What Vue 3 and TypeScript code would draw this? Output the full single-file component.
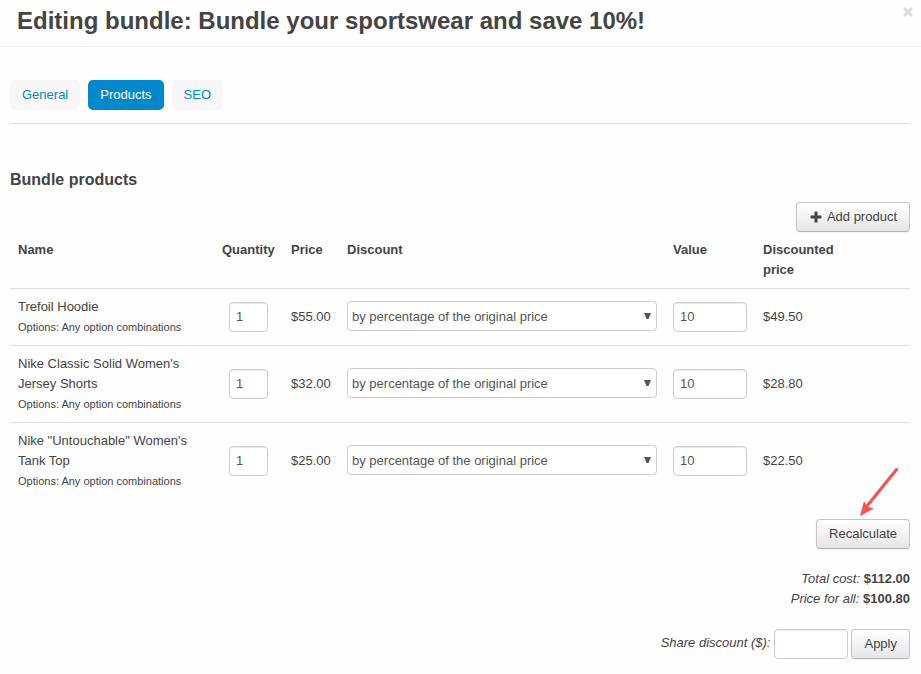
<script setup lang="ts">
import { ref } from 'vue'

interface Product {
  id: number
  name: string
  quantity: string
  price: string
  discount: string
  value: string
  discounted: string
}

const tabs = ['General', 'Products', 'SEO']
const activeTab = ref('Products')
const shareDiscount = ref('')

const products = ref<Product[]>([
  { id: 1, name: 'Trefoil Hoodie', quantity: '1', price: '$55.00', discount: 'by_percentage', value: '10', discounted: '$49.50' },
  { id: 2, name: "Nike Classic Solid Women's Jersey Shorts", quantity: '1', price: '$32.00', discount: 'by_percentage', value: '10', discounted: '$28.80' },
  { id: 3, name: 'Nike "Untouchable" Women\'s Tank Top', quantity: '1', price: '$25.00', discount: 'by_percentage', value: '10', discounted: '$22.50' },
])
</script>

<template>
  <div class="dialog">
    <header class="dialog-header">
      <h1>Editing bundle: Bundle your sportswear and save 10%!</h1>
      <button type="button" class="close" aria-label="Close">
        <svg width="10" height="10" viewBox="0 0 10 10" aria-hidden="true">
          <path d="M2.200 2.200L7.800 7.800M7.800 2.200L2.200 7.800" stroke="#ddd" stroke-width="3" stroke-linecap="square" />
        </svg>
      </button>
    </header>

    <main class="content">
      <nav class="tabs">
        <a
          v-for="tab in tabs"
          :key="tab"
          href="#"
          :class="['tab', { active: tab === activeTab }]"
          @click.prevent="activeTab = tab"
        >{{ tab }}</a>
      </nav>

      <h2>Bundle products</h2>

      <div class="toolbar">
        <button type="button" class="btn">
          <svg class="plus" width="12" height="12" viewBox="0 0 12 12" aria-hidden="true">
            <path d="M5.100.5h1.800q.6 0 .6.6v3.400h3.400q.6 0 .6.6v1.800q0 .6-.6.6H7.500v3.400q0 .6-.6.6H5.100q-.6 0-.6-.6V7.500H1.100q-.6 0-.6-.6V5.100q0-.6.6-.6H4.500V1.100q0-.6.6-.6z" fill="#444" />
          </svg>
          <span>Add product</span>
        </button>
      </div>

      <table>
        <colgroup>
          <col class="col-name">
          <col class="col-quantity">
          <col class="col-price">
          <col>
          <col class="col-value">
          <col class="col-discounted">
          <col class="col-end">
        </colgroup>
        <thead>
          <tr>
            <th scope="col">Name</th>
            <th scope="col">Quantity</th>
            <th scope="col">Price</th>
            <th scope="col">Discount</th>
            <th scope="col">Value</th>
            <th scope="col">Discounted price</th>
            <td></td>
          </tr>
        </thead>
        <tbody>
          <tr v-for="p in products" :key="p.id">
            <td>
              <div>{{ p.name }}</div>
              <div class="options">Options: Any option combinations</div>
            </td>
            <td class="quantity-cell">
              <input v-model="p.quantity" type="text" class="field quantity" :aria-label="`Quantity of ${p.name}`">
            </td>
            <td>{{ p.price }}</td>
            <td class="discount-cell">
              <div class="select-wrap">
                <select v-model="p.discount" class="field" :aria-label="`Discount for ${p.name}`">
                  <option value="by_percentage">by percentage of the original price</option>
                </select>
                <svg class="caret" width="7" height="6" viewBox="0 0 7 6" aria-hidden="true">
                  <path d="M0 0H7L4.500 6H2.500Z" fill="#555" />
                </svg>
              </div>
            </td>
            <td>
              <input v-model="p.value" type="text" class="field amount" :aria-label="`Value for ${p.name}`">
            </td>
            <td>{{ p.discounted }}</td>
            <td></td>
          </tr>
        </tbody>
      </table>

      <section class="summary">
        <div class="recalculate">
          <button type="button" class="btn">Recalculate</button>
          <svg class="arrow" width="40" height="50" viewBox="0 0 40 50" aria-hidden="true">
            <path d="M37.500 2.500L8 39" stroke="#ff4f49" stroke-width="3" stroke-linecap="round" />
            <path d="M1 49.200L5 34L8 39.500L14.500 41.500Z" fill="#ff4f49" />
          </svg>
        </div>
        <div class="totals">
          <div><em>Total cost:</em> <strong>$112.00</strong></div>
          <div><em>Price for all:</em> <strong>$100.80</strong></div>
        </div>
        <form class="share" @submit.prevent>
          <label for="share-discount">Share discount ($):</label>
          <input id="share-discount" v-model="shareDiscount" type="text" class="field amount">
          <button type="submit" class="btn">Apply</button>
        </form>
      </section>
    </main>
  </div>
</template>

<style>
body {
  background: #fefefe;
}
</style>

<style scoped>
* {
  box-sizing: border-box;
}

.dialog {
  font: 13px/20px "Liberation Sans", Arial, sans-serif;
  color: #444;
}

.dialog-header {
  display: flex;
  justify-content: space-between;
  align-items: flex-start;
  padding: 0 8px 4px 17px;
  border-bottom: 1px solid #eee;
}

h1 {
  margin: 0;
  font-size: 24px;
  line-height: 42px;
}

.close {
  display: flex;
  margin-top: 7px;
  padding: 0;
  border: 0;
  background: none;
}

.content {
  padding: 33px 11px 15px 10px;
}

.tabs {
  display: flex;
  gap: 8px;
  padding-bottom: 13px;
  border-bottom: 1px solid #ddd;
}

.tab {
  padding: 5px 12px;
  border-radius: 5px;
  background: #f7f7f7;
  color: #08c;
  text-decoration: none;
}

.tab.active {
  background: #08c;
  color: #fff;
}

h2 {
  margin: 46px 0 12px;
  font-size: 16px;
  line-height: 20px;
}

.toolbar {
  display: flex;
  justify-content: flex-end;
}

.btn {
  display: inline-flex;
  align-items: center;
  gap: 5px;
  height: 30px;
  padding: 0 12px;
  border: 1px solid #c5c5c5;
  border-bottom-color: #b3b3b3;
  border-radius: 4px;
  background: linear-gradient(#fff, #e6e6e6);
  box-shadow: 0 1px 2px rgba(0, 0, 0, 0.05);
  color: #444;
  font: inherit;
}

.plus {
  margin-left: 1px;
}

table {
  width: 100%;
  table-layout: fixed;
  border-collapse: separate;
  border-spacing: 0;
}

.col-name {
  width: 204px;
}

.col-quantity {
  width: 69px;
}

.col-price {
  width: 56px;
}

.col-value,
.col-discounted {
  width: 90px;
}

.col-end {
  width: 65px;
}

th,
td {
  padding: 8px;
  text-align: left;
  vertical-align: middle;
}

th {
  vertical-align: top;
}

tbody td {
  border-top: 1px solid #ddd;
}

.options {
  font-size: 11px;
}

.quantity-cell {
  padding-left: 15px;
}

tbody .discount-cell {
  padding-top: 0;
  padding-bottom: 2px;
}

.field {
  display: block;
  height: 30px;
  border: 1px solid #ccc;
  border-radius: 4px;
  background: #fff;
  color: #555;
  font: inherit;
}

input.field {
  padding: 0 6px 2px;
  box-shadow: inset 0 1px 1px rgba(0, 0, 0, 0.075);
}

.quantity {
  width: 39px;
}

.amount {
  width: 74px;
}

.select-wrap {
  position: relative;
}

select.field {
  width: 100%;
  padding: 2px 20px 0 4px;
  appearance: none;
}

.caret {
  position: absolute;
  top: 12px;
  right: 6px;
  pointer-events: none;
}

.summary {
  display: flex;
  flex-direction: column;
  align-items: flex-end;
  gap: 20px;
  padding-top: 20px;
}

.recalculate {
  position: relative;
}

.arrow {
  position: absolute;
  right: 11px;
  bottom: 32px;
  pointer-events: none;
}

.totals {
  text-align: right;
}

.share {
  display: flex;
}

.share label {
  padding-top: 4px;
  margin-right: 4px;
  font-style: italic;
}

.share .btn {
  margin-left: 3px;
}
</style>
